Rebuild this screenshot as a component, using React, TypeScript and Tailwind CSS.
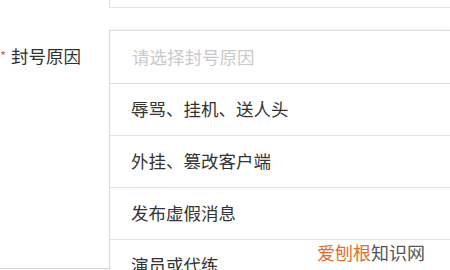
const options = ['辱骂、挂机、送人头', '外挂、篡改客户端', '发布虚假消息', '演员或代练'];

export default function App() {
  return (
    <div className="relative w-[450px] h-[270px] overflow-hidden bg-white font-['Microsoft_YaHei','Noto_Sans_CJK_SC',sans-serif] text-[17.5px]">
      <div className="flex flex-col h-full">
        {/* previous field, cut off at the top */}
        <div className="flex h-[8px] shrink-0">
          <div className="w-[109px]" />
          <div className="flex-1 border-l border-b border-[#e2e2e2]" />
        </div>
        <div className="h-[22px] shrink-0" />

        <div className="flex flex-1 min-h-0">
          <div className="w-[109px] shrink-0 flex flex-col">
            <div className="h-[53px] flex items-center">
              <span className="text-[13px] leading-none text-[#c86a6a] mr-[5px] -mt-[2px]">*</span>
              <span className="text-[#2f2f2f]">封号原因</span>
            </div>
            <div className="flex-1" />
            <div className="border-b border-[#d4d4d4] mb-[1px]" />
          </div>

          <div className="flex-1 border-l border-t border-[#dcdcdc] shadow-[0_-2px_3px_rgba(0,0,0,0.03)]">
            <div className="h-[53px] flex items-center pl-[22px] text-[#c9c9c9] border-b border-[#dedede]">
              请选择封号原因
            </div>
            {options.map((opt) => (
              <div
                key={opt}
                className="h-[52px] flex items-center pl-[21px] text-[#333] border-b border-[#e4e4e4]"
              >
                {opt}
              </div>
            ))}
          </div>
        </div>
      </div>

      {/* watermark */}
      <div className="absolute left-[317px] top-[240px] text-[18px] leading-[24px]">
        <span className="text-[#e0702e]">爱刨根</span>
        <span className="text-[#555]">知识网</span>
      </div>
    </div>
  );
}
